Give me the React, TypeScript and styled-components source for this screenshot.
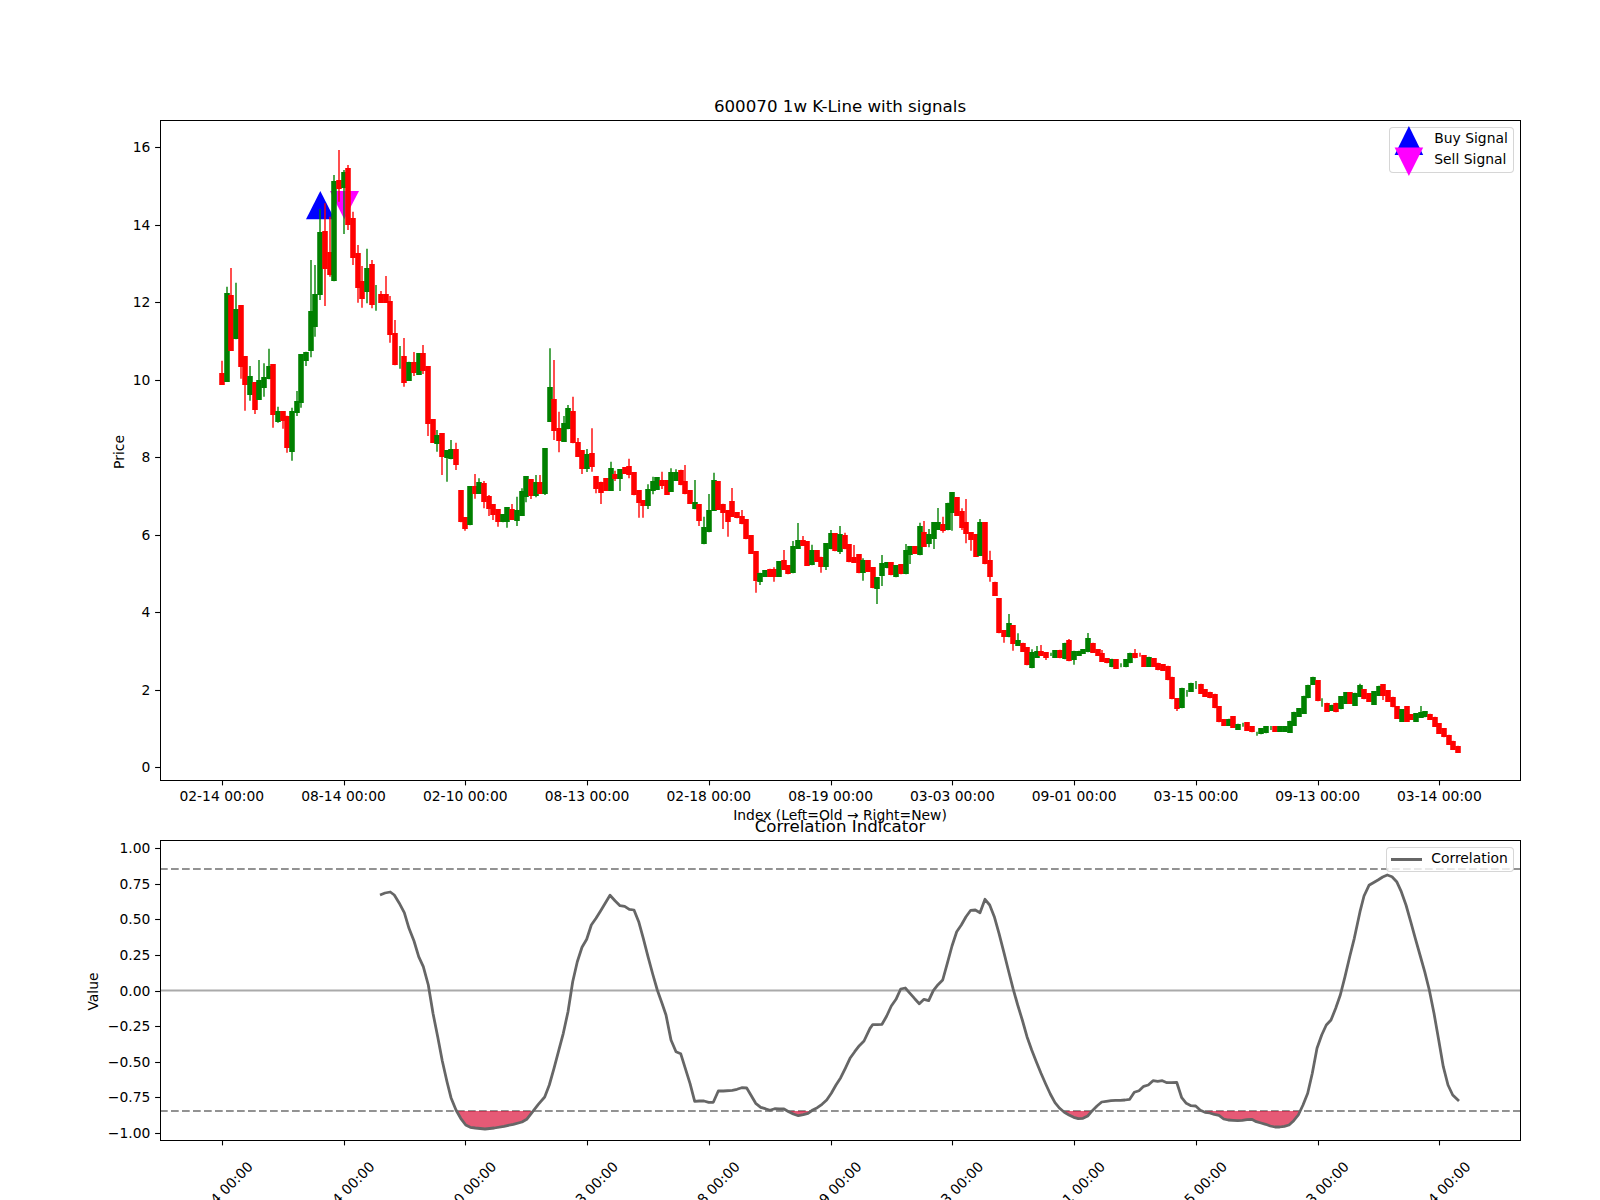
import React from 'react'
import styled, { createGlobalStyle } from 'styled-components'

type Candle = ['g' | 'r', number, number, number?, number?]
type Point = [number, number]

// readings are in 1/3 px steps, every block has its own vertical origin
const BLOCK_A: Candle[] = [
  ['r', 850, 884, 812], ['g', 610, 875, 590], ['r', 616, 782, 534], ['g', 658, 748, 578], ['r', 646, 830, 646, 866],
  ['r', 798, 884, 798, 962], ['g', 858, 916, 828, 932], ['r', 877, 959, 877, 972], ['g', 871, 929, 810], ['g', 862, 893, 820, 920],
  ['g', 828, 868, 776], ['r', 823, 974, 823, 1013], ['g', 964, 995, 950, 998], ['r', 964, 992, 964, 1016], ['r', 977, 1073, 977, 1088],
  ['g', 962, 1085, 953, 1112], ['g', 932, 970, 903, 978], ['g', 793, 940, 793, 953], ['g', 785, 812, 785, 828], ['g', 664, 782, 510, 802],
  ['g', 611, 712, 525, 740], ['g', 427, 614, 357, 630], ['r', 424, 536, 340, 648], ['r', 487, 556, 380, 560], ['g', 274, 574, 255],
  ['r', 271, 298, 180, 335], ['g', 247, 295, 240, 432], ['r', 235, 404, 225, 420], ['r', 385, 505, 365, 525], ['r', 490, 593, 465, 638],
  ['r', 574, 628, 528, 653], ['g', 535, 607, 476, 640], ['r', 523, 644, 510, 655], ['g', 0, 0, 585, 662], ['r', 613, 638, 603],
  ['r', 613, 638, 558], ['r', 634, 734, 618, 758], ['r', 730, 826, 690], ['g', 0, 0, 768, 836], ['r', 798, 878, 744, 890],
  ['g', 815, 872], ['r', 817, 850, 786, 858], ['g', 790, 855], ['r', 790, 842, 765, 852], ['r', 829, 1003, 829, 1038],
  ['r', 988, 1058], ['g', 1034, 1062, 1020, 1085], ['r', 1030, 1102, 1030, 1155], ['g', 1080, 1105, 1080, 1175], ['g', 1078, 1108, 1050],
  ['r', 1078, 1124, 1058, 1140],
]

const BLOCK_B: Candle[] = [
  ['r', 210, 307], ['r', 292, 327, 292, 332], ['g', 198, 316], ['r', 198, 221, 162, 236], ['g', 187, 221, 175],
  ['r', 190, 245, 183, 265], ['r', 228, 268, 225, 288], ['r', 252, 285, 252, 300], ['r', 268, 306, 268, 320], ['g', 282, 307],
  ['g', 262, 307, 262, 323], ['r', 268, 299, 252], ['g', 271, 302, 230, 318], ['g', 214, 287, 205], ['g', 168, 230, 168, 247],
  ['r', 178, 228, 178, 237], ['g', 187, 227, 165, 232], ['r', 187, 222, 165],
]

const BLOCK_C: Candle[] = [
  ['g', 325, 462, 325, 465], ['g', 142, 245, 25], ['r', 178, 272, 60, 300], ['r', 265, 303, 215, 337], ['g', 250, 305, 228],
  ['g', 205, 268, 195], ['r', 214, 310, 170], ['r', 307, 350, 294], ['r', 331, 387, 331, 402], ['g', 343, 388, 327, 396],
  ['r', 340, 380, 265, 395], ['r', 409, 446, 409, 460], ['r', 425, 458, 425, 492], ['r', 415, 452], ['g', 385, 452, 365],
  ['r', 401, 418, 392, 423], ['g', 388, 417, 388, 453], ['r', 382, 402], ['r', 379, 405, 356, 415], ['r', 397, 466],
  ['r', 451, 490, 451, 533], ['r', 481, 499, 481, 533], ['g', 448, 497, 433, 507], ['g', 424, 452, 410, 463], ['g', 412, 450],
  ['r', 419, 438, 395, 447], ['r', 420, 465], ['g', 395, 456, 385], ['g', 395, 422, 388], ['r', 389, 436],
  ['r', 422, 463, 375], ['r', 450, 491], ['g', 487, 508, 420], ['r', 492, 544, 492, 558], ['g', 560, 613, 530],
  ['g', 511, 577, 462], ['g', 421, 513, 398], ['r', 423, 509], ['r', 491, 518, 491, 567], ['r', 510, 547, 510, 590],
  ['r', 484, 530, 444], ['r', 516, 535], ['r', 527, 553, 510], ['r', 538, 598], ['r', 586, 641],
  ['r', 634, 724, 634, 758], ['g', 698, 725, 698, 735], ['g', 690, 711], ['r', 686, 710], ['r', 688, 710, 682, 725],
  ['g', 663, 710], ['r', 660, 690, 630], ['r', 676, 703], ['g', 619, 700, 603], ['g', 601, 627, 549],
  ['r', 601, 618, 588], ['r', 604, 677], ['g', 631, 676, 614], ['r', 631, 665], ['r', 650, 680, 650, 698],
  ['g', 610, 681, 610, 690], ['g', 580, 628, 570], ['r', 580, 634], ['g', 583, 635, 558, 642], ['r', 586, 628, 578],
  ['r', 612, 667], ['r', 650, 668, 615], ['r', 643, 700], ['g', 659, 698, 655, 722], ['r', 660, 696],
  ['r', 682, 745], ['g', 712, 746, 712, 792], ['g', 670, 707, 645, 738], ['g', 667, 685], ['r', 667, 706],
  ['g', 676, 712], ['r', 672, 703], ['g', 630, 703, 612], ['g', 619, 645, 619, 672], ['r', 619, 641],
  ['g', 559, 646, 548], ['r', 576, 620, 543], ['g', 583, 612, 567, 622], ['g', 546, 598, 546, 627], ['g', 546, 570, 504],
  ['r', 552, 572, 530, 578], ['g', 488, 571],
]

const BLOCK_D: Candle[] = [
  ['g', 37, 100, 37, 152], ['r', 52, 107], ['r', 92, 143, 85, 150], ['r', 127, 162, 57, 190], ['r', 157, 181, 157, 212],
  ['r', 163, 230], ['g', 127, 228, 117], ['r', 127, 253], ['r', 241, 290, 212, 305], ['r', 305, 347],
  ['r', 355, 460], ['r', 450, 472, 450, 488], ['g', 430, 472, 402], ['r', 436, 492, 436, 512], ['g', 481, 498, 460],
  ['r', 488, 515], ['r', 502, 556], ['g', 515, 565, 508], ['g', 513, 534, 498], ['r', 512, 528, 495],
  ['r', 516, 533, 516, 540], ['g', 0, 0, 518, 528], ['g', 510, 534], ['r', 509, 535], ['g', 488, 538],
  ['r', 481, 544, 477], ['g', 512, 540, 512, 554], ['g', 512, 528], ['g', 507, 522], ['g', 473, 517, 459],
  ['r', 488, 518], ['r', 507, 528], ['r', 519, 546, 510], ['r', 534, 550], ['g', 536, 562],
  ['r', 537, 566], ['g', 0, 0, 550, 562], ['g', 537, 562], ['g', 518, 550], ['r', 518, 535, 507],
  ['r', 0, 0, 518, 530], ['r', 525, 560], ['g', 530, 560], ['r', 535, 560], ['r', 548, 571],
  ['r', 552, 572], ['r', 557, 601], ['r', 590, 658], ['r', 655, 688, 655, 693], ['g', 623, 685],
  ['g', 0, 0, 630, 650], ['g', 608, 635], ['g', 0, 0, 603, 627], ['r', 611, 642], ['r', 627, 651],
  ['r', 635, 655], ['r', 641, 685], ['r', 679, 727], ['r', 718, 738], ['g', 716, 737],
  ['r', 709, 743], ['g', 731, 749], ['g', 0, 0, 728, 740], ['r', 726, 752], ['r', 738, 757],
  ['g', 0, 0, 755, 767], ['g', 745, 763], ['g', 738, 760], ['g', 0, 0, 738, 750], ['r', 738, 755],
  ['g', 738, 756], ['g', 738, 756], ['g', 722, 758], ['g', 695, 737], ['g', 684, 710],
  ['g', 647, 701], ['g', 614, 655], ['g', 590, 615], ['r', 601, 664], ['g', 0, 0, 655, 680],
  ['r', 668, 695], ['g', 674, 693], ['r', 668, 697], ['g', 649, 688], ['g', 636, 672],
  ['r', 637, 672], ['g', 638, 677], ['g', 615, 651, 611], ['r', 628, 658], ['r', 640, 666],
  ['g', 633, 675], ['g', 617, 648], ['r', 613, 647, 613, 660], ['r', 631, 665], ['r', 650, 682],
  ['r', 679, 716], ['g', 688, 725], ['r', 679, 725], ['r', 702, 720], ['g', 700, 725],
  ['g', 695, 714, 678], ['g', 694, 712], ['r', 701, 719], ['r', 710, 740], ['r', 730, 761],
  ['r', 745, 772], ['r', 764, 795], ['r', 782, 809], ['r', 797, 818],
]

const CANDLE_X0 = 221.82
const CANDLE_STEP = 4.683

const blocks: [number, Candle[]][] = [
  [90, BLOCK_A],
  [420, BLOCK_B],
  [340, BLOCK_C],
  [480, BLOCK_D],
]

const candles = blocks.flatMap(([y0, rows]) =>
  rows.map(([color, top, bottom, high, low]) => ({
    color: color === 'g' ? '#008000' : '#ff0000',
    top: top ? Math.round(y0 + top / 3) : 0,
    bottom: bottom ? Math.round(y0 + bottom / 3) : 0,
    high: y0 + (high ?? top) / 3,
    low: y0 + (low ?? bottom) / 3,
  }))
)

const LINE_A: Point[] = [
  [30, 105], [45, 99], [61, 96], [73, 105], [87, 128], [103, 158], [117, 205], [132, 243], [146, 290], [160, 320],
  [175, 375], [189, 460], [203, 530], [217, 603], [231, 665], [243, 713], [258, 750], [272, 775], [287, 795], [301, 802],
  [316, 804], [345, 807], [373, 804], [402, 799], [430, 793], [456, 786], [470, 778], [488, 755], [505, 733], [524, 711],
  [538, 675], [552, 625], [566, 572], [580, 520], [594, 455], [608, 365], [622, 305], [636, 262], [650, 238], [664, 195],
  [678, 175], [692, 152], [720, 106], [735, 122], [750, 137], [764, 139], [778, 148], [792, 150], [806, 185], [820, 235],
  [834, 290], [848, 342], [862, 390], [876, 430], [888, 465], [903, 540], [918, 575], [932, 581], [946, 625], [960, 670],
  [974, 724], [988, 723], [1002, 723], [1016, 727], [1030, 727], [1045, 693], [1060, 693], [1087, 691], [1101, 688], [1115, 683],
  [1130, 684], [1143, 706], [1157, 730], [1172, 742], [1186, 746], [1200, 751], [1214, 746], [1228, 747], [1242, 747], [1256, 755],
  [1270, 762], [1285, 767], [1300, 764], [1314, 760], [1328, 750], [1342, 743], [1356, 733], [1370, 720], [1384, 700], [1398, 675],
  [1412, 653], [1426, 625], [1440, 595], [1454, 575], [1468, 557], [1482, 543], [1500, 505],
]

const LINE_B: Point[] = [
  [38, 494], [52, 494], [66, 493], [80, 468], [94, 438], [108, 418], [122, 387], [136, 384], [150, 400], [164, 416],
  [178, 431], [192, 418], [206, 422], [220, 392], [234, 374], [248, 360], [262, 310], [276, 258], [290, 215], [304, 195],
  [318, 170], [332, 151], [346, 150], [360, 158], [375, 118], [389, 135], [403, 170], [417, 220], [431, 275], [445, 330],
  [459, 385], [473, 435], [487, 480], [501, 530], [515, 570], [529, 605], [543, 640], [557, 672], [571, 702], [585, 728],
  [599, 745], [613, 757], [627, 765], [641, 772], [655, 776], [669, 775], [683, 768], [697, 752], [711, 738], [725, 726],
  [739, 724], [753, 722], [767, 721], [781, 721], [795, 720], [809, 718], [823, 697], [837, 692], [851, 679], [865, 675],
  [879, 662], [893, 664], [907, 662], [921, 668], [935, 668], [950, 667], [965, 713], [979, 730], [993, 737], [1007, 738],
  [1021, 751], [1035, 757], [1049, 759], [1063, 763], [1077, 766], [1091, 777], [1105, 780], [1119, 781], [1133, 782], [1147, 781],
  [1161, 779], [1175, 778], [1189, 785], [1203, 789], [1217, 793], [1231, 798], [1245, 801], [1259, 801], [1273, 799], [1287, 795],
  [1301, 782], [1315, 765], [1329, 735], [1343, 700], [1357, 640], [1371, 565], [1385, 525], [1399, 495], [1413, 480], [1427, 445],
  [1441, 405], [1455, 350], [1469, 290], [1483, 235], [1500, 155],
]

const LINE_C: Point[] = [
  [372, 168], [387, 136], [400, 128], [414, 120], [428, 111], [442, 105], [456, 110], [470, 125], [484, 155], [498, 195],
  [512, 245], [526, 295], [540, 345], [554, 395], [568, 450], [582, 520], [596, 600], [610, 680], [624, 735], [638, 765],
  [657, 783],
]

const shift = (rows: Point[], x0: number, y0: number): Point[] =>
  rows.map(([x, y]) => [x0 + x / 3, y0 + y / 3])

const corrLine: Point[] = [
  ...shift(LINE_A, 370, 860),
  ...shift(LINE_B, 860, 860),
  ...shift(LINE_C, 1240, 840),
]

const LOWER_BAND = 1111
const UPPER_BAND = 869
const ZERO_LINE = 990.5

const toPoints = (rows: Point[]) =>
  rows.map(([x, y]) => `${x.toFixed(1)},${y.toFixed(1)}`).join(' ')

// runs of the line below the lower band, closed along the band
const bandFills = (rows: Point[], band: number) => {
  const fills: Point[][] = []
  let run: Point[] = []
  rows.forEach((p, i) => {
    const prev = rows[i - 1]
    if (prev && prev[1] > band !== p[1] > band) {
      const t = (band - prev[1]) / (p[1] - prev[1])
      run.push([prev[0] + (p[0] - prev[0]) * t, band])
      if (prev[1] > band) {
        fills.push(run)
        run = []
      }
    }
    if (p[1] > band) run.push(p)
  })
  return fills
}

const tickX = Array.from({ length: 11 }, (_, i) => CANDLE_X0 + 26 * i * CANDLE_STEP)
const tickDates = [
  '02-14 00:00',
  '08-14 00:00',
  '02-10 00:00',
  '08-13 00:00',
  '02-18 00:00',
  '08-19 00:00',
  '03-03 00:00',
  '09-01 00:00',
  '03-15 00:00',
  '09-13 00:00',
  '03-14 00:00',
]
const priceTicks = [16, 14, 12, 10, 8, 6, 4, 2, 0]
const valueTicks = ['1.00', '0.75', '0.50', '0.25', '0.00', '\u22120.25', '\u22120.50', '\u22120.75', '\u22121.00']

const priceY = (v: number) => 767 - 38.73 * v
const valueY = (i: number) => 848.3 + i * 35.59
const snap = (v: number) => Math.round(v) + 0.5

const GlobalStyle = createGlobalStyle`
  html, body {
    margin: 0;
    padding: 0;
    background: #fff;
  }
  body {
    font-family: "DejaVu Sans", sans-serif;
    color: #000;
  }
`

const Figure = styled.div`
  width: 1600px;
  height: 1200px;
  padding: 0 80px 0 160px;
  box-sizing: border-box;
  overflow: hidden;
  background: #fff;
  display: flex;
  flex-direction: column;
`

const Title = styled.div`
  height: 120px;
  padding-bottom: 3px;
  box-sizing: border-box;
  display: flex;
  align-items: flex-end;
  justify-content: center;
  font-size: 16.67px;
  line-height: 20px;
  flex: none;
`

// sits on the x label of the chart above, the same as in the original figure
const OverlappingTitle = styled.div`
  height: 20px;
  margin-top: -7px;
  text-align: center;
  font-size: 16.67px;
  line-height: 20px;
  flex: none;
`

const Plot = styled.div<{ $height: number }>`
  position: relative;
  height: ${(p) => p.$height}px;
  flex: none;

  svg.axes {
    display: block;
    width: 100%;
    height: 100%;
    overflow: visible;
    font-family: "DejaVu Sans", sans-serif;
    font-size: 13.89px;
  }
`

const XLabel = styled.div`
  height: 18px;
  margin-top: 26px;
  font-size: 13.89px;
  line-height: 18px;
  text-align: center;
  flex: none;
`

const LowerGap = styled.div`
  height: 3px;
  flex: none;
`

const Legend = styled.div`
  position: absolute;
  top: 7.3px;
  right: 6.2px;
  padding: 4.5px 5px;
  display: flex;
  flex-direction: column;
  gap: 7px;
  background: rgba(255, 255, 255, 0.8);
  border: 1px solid rgba(204, 204, 204, 0.8);
  border-radius: 4px;
  font-size: 13.89px;
`

const LegendRow = styled.div`
  display: flex;
  align-items: flex-start;
  gap: 11.1px;
  height: 14px;
  line-height: 11px;
  white-space: nowrap;
`

const MarkerIcon = styled.svg`
  width: 27.8px;
  height: 14px;
  overflow: visible;
  flex: none;
`

const LineKey = styled.span`
  display: block;
  width: 30.6px;
  height: 2.8px;
  margin: 5.6px -1.4px 0;
  background: #666;
  flex: none;
`

const App = () => {
  return (
    <>
      <GlobalStyle />
      <Figure>
        <Title>600070 1w K-Line with signals</Title>
        <Plot $height={660}>
          <svg className="axes" viewBox="160 120 1360 660">
            <rect x="160.5" y="120.5" width="1360" height="660" fill="none" stroke="#000" />
            <polygon points="320.3,191 306,219.3 334.7,219.3" fill="#0000ff" />
            <polygon points="330,191 359,191 344.3,219.3" fill="#ff00ff" />
            {candles.map((c, i) => {
              const x = Math.round(CANDLE_X0 + i * CANDLE_STEP)
              return (
                <g key={i}>
                  <line x1={x} x2={x} y1={c.high} y2={c.low} stroke={c.color} strokeWidth="1.39" />
                  {c.bottom > c.top && (
                    <rect x={x - 2.78} y={c.top} width="5.56" height={c.bottom - c.top} fill={c.color} />
                  )}
                </g>
              )
            })}
            {tickX.map((x, i) => (
              <g key={i}>
                <line x1={snap(x)} x2={snap(x)} y1="781" y2="785.4" stroke="#000" strokeWidth="1.1" />
                <text x={x} y="801.2" textAnchor="middle">
                  {tickDates[i]}
                </text>
              </g>
            ))}
            {priceTicks.map((v) => (
              <g key={v}>
                <line x1="155.1" x2="160" y1={snap(priceY(v))} y2={snap(priceY(v))} stroke="#000" strokeWidth="1.1" />
                <text x="150.3" y={priceY(v) + 5} textAnchor="end">
                  {v}
                </text>
              </g>
            ))}
            <text transform="translate(124 452) rotate(-90)" textAnchor="middle">
              Price
            </text>
          </svg>
          <Legend>
            <LegendRow>
              <MarkerIcon viewBox="0 0 27.8 14">
                <polygon points="13.9,-6.9 -0.4,22 28.2,22" fill="#0000ff" />
              </MarkerIcon>
              Buy Signal
            </LegendRow>
            <LegendRow>
              <MarkerIcon viewBox="0 0 27.8 14">
                <polygon points="-0.4,-6.6 28.2,-6.6 13.9,22.1" fill="#ff00ff" />
              </MarkerIcon>
              Sell Signal
            </LegendRow>
          </Legend>
        </Plot>
        <XLabel>Index (Left=Old → Right=New)</XLabel>
        <OverlappingTitle>Correlation Indicator</OverlappingTitle>
        <LowerGap />
        <Plot $height={300}>
          <svg className="axes" viewBox="160 840 1360 300">
            <line x1="160" x2="1520" y1={ZERO_LINE} y2={ZERO_LINE} stroke="#aaaaaa" strokeWidth="2" />
            {[UPPER_BAND, LOWER_BAND].map((y) => (
              <line key={y} x1="160" x2="1520" y1={y} y2={y} stroke="#929292" strokeWidth="2" strokeDasharray="7.7 3.3" />
            ))}
            {bandFills(corrLine, LOWER_BAND).map((run, i) => (
              <polygon key={i} points={toPoints(run)} fill="#dc143c" fillOpacity="0.7" />
            ))}
            <polyline points={toPoints(corrLine)} fill="none" stroke="#666666" strokeWidth="2.78" strokeLinejoin="round" />
            <rect x="160.5" y="840.5" width="1360" height="300" fill="none" stroke="#000" />
            {tickX.map((x, i) => (
              <g key={i}>
                <line x1={snap(x)} x2={snap(x)} y1="1141" y2="1145.4" stroke="#000" strokeWidth="1.1" />
                <text transform={`translate(${x - 1.5} 1194) rotate(-45)`} textAnchor="middle" dy="5">
                  {tickDates[i]}
                </text>
              </g>
            ))}
            {valueTicks.map((v, i) => (
              <g key={v}>
                <line x1="155.1" x2="160" y1={snap(valueY(i))} y2={snap(valueY(i))} stroke="#000" strokeWidth="1.1" />
                <text x="150.3" y={valueY(i) + 5} textAnchor="end">
                  {v}
                </text>
              </g>
            ))}
            <text transform="translate(98 991.5) rotate(-90)" textAnchor="middle">
              Value
            </text>
          </svg>
          <Legend>
            <LegendRow>
              <LineKey />
              Correlation
            </LegendRow>
          </Legend>
        </Plot>
      </Figure>
    </>
  )
}

export default App
